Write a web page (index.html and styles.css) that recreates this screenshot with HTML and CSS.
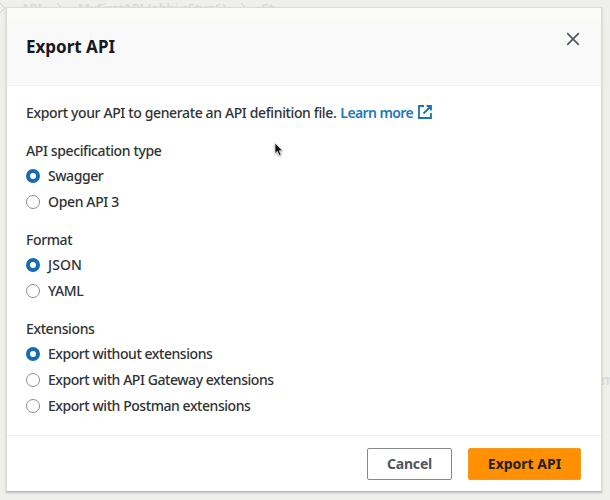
FILE: index.html
```html
<!DOCTYPE html>
<html lang="en">
<head>
<meta charset="utf-8">
<title>Export API</title>
<link rel="stylesheet" href="styles.css">
</head>
<body>
<div class="backdrop">
  <div class="crumbs"><svg viewBox="0 0 8 12"><path d="M1 1l5 5-5 5"/></svg><span>API</span><svg viewBox="0 0 8 12"><path d="M1 1l5 5-5 5"/></svg><span class="name">MyFirstAPI (abhi c5tvq6)</span><svg viewBox="0 0 8 12"><path d="M1 1l5 5-5 5"/></svg><span>St</span></div>
  <span class="behind">m</span>
</div>
<section class="modal">
  <header class="head">
    <h1>Export API</h1>
    <button class="close" aria-label="Close"><svg viewBox="0 0 14 14"><path d="M1.200 1.200l11.600 11.600M12.800 1.200L1.200 12.800"/></svg></button>
  </header>
  <main class="body">
    <p class="intro"><span>Export your API to generate an API definition file.</span><a class="learn">Learn more</a><svg class="ext" viewBox="0 0 14 14"><path d="M6 1H1v12h12V8M8.500 1H13v4.500M13 1L5.500 8.500"/></svg></p>
    <div class="group">
      <h2>API specification type</h2>
      <label><i class="radio on"></i><span class="tight">Swagger</span></label>
      <label><i class="radio"></i><span>Open API 3</span></label>
    </div>
    <div class="group">
      <h2>Format</h2>
      <label><i class="radio on"></i><span class="loose">JSON</span></label>
      <label><i class="radio"></i><span>YAML</span></label>
    </div>
    <div class="group">
      <h2>Extensions</h2>
      <label><i class="radio on"></i><span class="tight">Export without extensions</span></label>
      <label><i class="radio"></i><span class="tight">Export with API Gateway extensions</span></label>
      <label><i class="radio"></i><span class="tight">Export with Postman extensions</span></label>
    </div>
  </main>
  <footer class="foot">
    <button class="btn cancel">Cancel</button>
    <button class="btn primary">Export API</button>
  </footer>
</section>
<svg class="cursor" viewBox="0 0 10 15"><path d="M1 1v10.500l2.400-2.200 1.800 4.200 1.900-.8-1.800-4h3.200z"/></svg>
</body>
</html>
```
FILE: styles.css
```css
* { box-sizing: border-box; }
body {
  margin: 0;
  width: 610px;
  height: 500px;
  overflow: hidden;
  padding: 7px 8px 8px 6px;
  background: #efefec;
  color: #303235;
  font: 500 14px/20px "Noto Sans", "Open Sans", sans-serif;
}
.backdrop { position: absolute; inset: 0; overflow: hidden; color: #d5d8d7; }
.crumbs {
  position: absolute;
  left: -1px;
  top: 0;
  display: flex;
  align-items: center;
  gap: 14px;
  font-size: 13px;
  line-height: 16px;
  white-space: nowrap;
}
.crumbs svg { width: 8px; height: 12px; fill: none; stroke: #cbd2d3; }
.name { letter-spacing: -.1px; }
.behind { position: absolute; left: 601px; top: 370px; }
.modal {
  position: relative;
  height: 485px;
  display: flex;
  flex-direction: column;
  background: #fff;
  border: 1px solid #d9dddc;
  border-bottom-color: #b5bbbb;
  box-shadow: 0 1px 2px #b9c0c0;
}
.head {
  height: 78px;
  flex: none;
  display: flex;
  justify-content: space-between;
  align-items: flex-start;
  padding: 11px 21px 0 19px;
  background: #f9f9f9;
  border-top: 12px solid #fbfcf8;
  border-bottom: 1px solid #f1f2f1;
}
h1 { margin: 6px 0 0; font-size: 17px; line-height: 20px; font-weight: 700; letter-spacing: 0; color: #16191f; }
.close { width: 14px; height: 14px; margin-top: 1px; padding: 0; border: 0; background: none; }
.close svg { display: block; width: 14px; height: 14px; fill: none; stroke: #545b64; stroke-width: 1.8; }
.body { flex: 1; padding: 17px 19px 0; }
.intro { display: flex; align-items: center; height: 20px; margin: 0 0 18px; white-space: nowrap; letter-spacing: -.37px; }
.learn { margin-left: 4px; color: #1f78b9; font-weight: 600; letter-spacing: -.6px; }
.ext { width: 14px; height: 14px; margin-left: 5px; margin-top: -2px; fill: none; stroke: #1b72b5; stroke-width: 1.8; }
.group { height: 89px; white-space: nowrap; }
h2 { margin: 0 0 2px; font: inherit; height: 20px; letter-spacing: -.38px; }
label { display: flex; align-items: center; gap: 8px; height: 26px; letter-spacing: -.35px; }
.tight { letter-spacing: -.44px; }
.loose { letter-spacing: .1px; }
.radio { width: 14px; height: 14px; flex: none; border: 1px solid #8b8f90; border-radius: 50%; background: #fff; }
.radio.on { border: 4px solid #176bb1; }
.foot {
  height: 56px;
  flex: none;
  display: flex;
  justify-content: flex-end;
  gap: 16px;
  padding: 12px 20px 0 0;
  border-top: 1px solid #eceeee;
}
.btn {
  height: 32px;
  padding: 0;
  border: 1px solid #858b8e;
  border-radius: 2px;
  background: #fff;
  color: #51565e;
  font: 700 14px/20px "Noto Sans", sans-serif;
}
.cancel { width: 85px; letter-spacing: -.2px; }
.primary { width: 113px; background: #ff9004; border-color: #f49b1c; color: #24201b; }
.cursor { position: absolute; left: 274px; top: 142px; width: 10px; height: 15px; fill: #111; stroke: #eee; stroke-width: .7; filter: drop-shadow(0 1px 1px #aaa); }
```
